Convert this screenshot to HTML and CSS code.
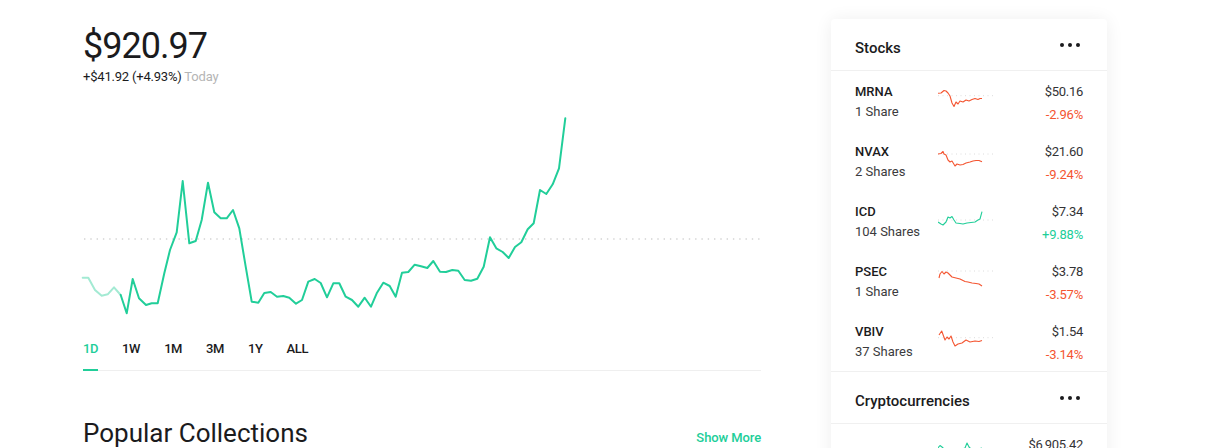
FILE: index.html
```html
<!DOCTYPE html>
<html lang="en">
<head>
<meta charset="utf-8">
<title>Portfolio</title>
<link rel="stylesheet" href="styles.css">
</head>
<body>
<div class="page">
  <main class="main">
    <h1 class="price">$920.97</h1>
    <div class="change">+$41.92 (+4.93%) <span class="today">Today</span></div>
    <svg class="chart" width="678" height="230" viewBox="83 100 678 230">
      <line x1="84" y1="239" x2="761" y2="239" class="baseline"/>
      <polyline class="line-pre" points="82.7,277.7 88.3,277.7 95,290 101.7,295.7 107.7,294.3 114,287.3 120.7,295"/>
      <polyline class="line" points="120.7,295 126.7,313.3 132.7,279 139,298.3 146,305 151.7,303.3 157.7,303.3 164.3,273.3 170,250 176.7,232.3 182.7,181 189.3,243.3 195.7,241 201.7,220 208,182.7 214.3,212.3 220.7,218.3 226.7,218.3 233,210 239.3,228.3 245.7,266.7 251.7,301.7 258.3,302.7 264.3,293 270.7,292 277,296.7 283.3,296 289.3,297.7 296,303.7 302,300 308.3,281.7 314.7,279 320.7,283 327,297.3 333.3,283.3 339.3,283.3 345.7,296.7 352,300 358.3,306.7 364.7,297.7 371,306.7 376.7,293.3 383.3,282.7 389.7,286 395.7,296.7 402,272.7 408.3,272 414.7,264.7 421,266.3 427.3,268 433.3,261 440,271.7 446,272 452.3,270 458.3,270.7 464.7,280 471,280.7 477.3,278.7 483.7,266.7 490,237.3 496.3,248.3 502.7,252 508.7,258 515,247 521.3,242.3 527.7,229.3 533.7,223.3 540,190 546.3,194 552.7,184.3 559,168.3 565.3,118.3"/>
    </svg>
    <nav class="tabs">
      <span class="tab active">1D</span>
      <span class="tab">1W</span>
      <span class="tab">1M</span>
      <span class="tab">3M</span>
      <span class="tab">1Y</span>
      <span class="tab">ALL</span>
    </nav>
    <div class="section-head">
      <h2 class="section-title">Popular Collections</h2>
      <a class="show-more">Show More</a>
    </div>
  </main>

  <aside class="card">
    <div class="card-head">
      <span class="card-title">Stocks</span>
      <svg class="dots" width="22" height="6" viewBox="0 0 22 6"><circle cx="3" cy="3" r="2"/><circle cx="11" cy="3" r="2"/><circle cx="19" cy="3" r="2"/></svg>
    </div>

    <div class="row">
      <div class="col-left"><div class="ticker">MRNA</div><div class="shares">1 Share</div></div>
      <svg class="spark" width="60" height="26" viewBox="0 0 60 26">
        <line x1="0" y1="9.7" x2="58" y2="9.7" class="spark-base"/>
        <polyline class="spark-red" points="0,7.3 3,7 6,4.5 8,5 10,7 12,10 14,17 16,20.5 18,16 20,18 22,15 25,16 28,14 31,15 34,13.5 37,12.5 40,13.5 42,12.5 44,12.5"/>
      </svg>
      <div class="col-right"><div class="quote">$50.16</div><div class="pct down">-2.96%</div></div>
    </div>

    <div class="row">
      <div class="col-left"><div class="ticker">NVAX</div><div class="shares">2 Shares</div></div>
      <svg class="spark" width="60" height="26" viewBox="0 0 60 26">
        <line x1="0" y1="8" x2="58" y2="8" class="spark-base"/>
        <polyline class="spark-red" points="0,8 3,7.5 5,5.5 6,8 8,9 10,14 12,16 14,15 17,20 19,18 22,19 25,18.5 28,17 32,16 35,15 38,14.5 41,14.5 44,15.7"/>
      </svg>
      <div class="col-right"><div class="quote">$21.60</div><div class="pct down">-9.24%</div></div>
    </div>

    <div class="row">
      <div class="col-left"><div class="ticker">ICD</div><div class="shares">104 Shares</div></div>
      <svg class="spark" width="60" height="26" viewBox="0 0 60 26">
        <line x1="0" y1="14" x2="58" y2="14" class="spark-base"/>
        <polyline class="spark-green" points="0,16 3,18 5,19 8,16 10,11 12,12 14,10.5 16,14 18,17 22,17.5 25,18 29,17 33,16.5 37,16 40,14 42,13 44,5.7"/>
      </svg>
      <div class="col-right"><div class="quote">$7.34</div><div class="pct up">+9.88%</div></div>
    </div>

    <div class="row">
      <div class="col-left"><div class="ticker">PSEC</div><div class="shares">1 Share</div></div>
      <svg class="spark" width="60" height="26" viewBox="0 0 60 26">
        <line x1="0" y1="5" x2="58" y2="5" class="spark-base"/>
        <polyline class="spark-red" points="1,12 2,8 4,5.5 6,8 8,6 10,7 12,9 14,11 18,12 22,13 27,15.5 30,16 34,17 38,17.5 41,18 44,20"/>
      </svg>
      <div class="col-right"><div class="quote">$3.78</div><div class="pct down">-3.57%</div></div>
    </div>

    <div class="row">
      <div class="col-left"><div class="ticker">VBIV</div><div class="shares">37 Shares</div></div>
      <svg class="spark" width="60" height="26" viewBox="0 0 60 26">
        <line x1="0" y1="11.7" x2="58" y2="11.7" class="spark-base"/>
        <polyline class="spark-red" points="1,9 3.7,5 7,14 9,11 11,13 13,10 15,16 17,20 20,18 24,17 28,14 32,16 37,15 41,15.5 44,14.5"/>
      </svg>
      <div class="col-right"><div class="quote">$1.54</div><div class="pct down">-3.14%</div></div>
    </div>

    <div class="card-head section-sep">
      <span class="card-title">Cryptocurrencies</span>
      <svg class="dots" width="22" height="6" viewBox="0 0 22 6"><circle cx="3" cy="3" r="2"/><circle cx="11" cy="3" r="2"/><circle cx="19" cy="3" r="2"/></svg>
    </div>

    <div class="row crypto">
      <div class="col-left"></div>
      <svg class="spark" width="60" height="26" viewBox="0 0 60 26">
        <line x1="0" y1="12" x2="58" y2="12" class="spark-base"/>
        <polyline class="spark-green" points="0,9 2,6.5 4,8 6,10 9,11 12,10 15,12 18,11 21,13 24,10 27,9 29,4 31,8 34,11 37,12 40,10 44,9"/>
      </svg>
      <div class="col-right"><div class="quote">$6,905.42</div></div>
    </div>
  </aside>
</div>
</body>
</html>
```

FILE: styles.css
```css
* { box-sizing: border-box; }

html, body {
  margin: 0;
  padding: 0;
  background: #ffffff;
}

body {
  font-family: Roboto, "Liberation Sans", sans-serif;
  color: #1b1b1d;
  overflow: hidden;
}

.page {
  display: flex;
  align-items: flex-start;
  gap: 70px;
  padding-left: 83px;
}

.main {
  width: 678px;
  flex: none;
  padding-top: 26px;
}

.price {
  margin: 0;
  font-size: 36px;
  line-height: 40px;
  font-weight: 400;
  letter-spacing: -1px;
}

.change {
  margin-top: 3px;
  font-size: 13px;
  line-height: 16px;
  letter-spacing: -0.2px;
  color: #1b1b1d;
}

.today {
  color: #b5b5b5;
}

.chart {
  display: block;
  margin-top: 15px;
  overflow: visible;
}

.chart .baseline {
  stroke: #d4d4d4;
  stroke-width: 1.4;
  stroke-dasharray: 1.4 4.9;
}

.chart polyline {
  fill: none;
  stroke-width: 2;
  stroke-linejoin: round;
  stroke-linecap: round;
}

.chart .line { stroke: #21ce99; }
.chart .line-pre { stroke: #a3ead3; }

.tabs {
  display: flex;
  gap: 24px;
  padding-top: 11px;
  border-bottom: 1px solid #efefef;
}

.tab {
  font-size: 13px;
  line-height: 16px;
  font-weight: 500;
  letter-spacing: -0.4px;
  padding-bottom: 12px;
  margin-bottom: -1px;
  border-bottom: 2px solid transparent;
  color: #1b1b1d;
}

.tab.active {
  color: #21ce99;
  border-bottom-color: #21ce99;
}

.section-head {
  display: flex;
  justify-content: space-between;
  align-items: baseline;
  margin-top: 46px;
}

.section-title {
  margin: 0;
  font-size: 26px;
  line-height: 32px;
  font-weight: 400;
}

.show-more {
  font-size: 13px;
  font-weight: 500;
  color: #21ce99;
  letter-spacing: -0.1px;
}

.card {
  width: 276px;
  flex: none;
  margin-top: 19px;
  background: #ffffff;
  border-radius: 4px;
  box-shadow: 0 1px 18px rgba(0, 0, 0, 0.07);
}

.card-head {
  display: flex;
  justify-content: space-between;
  align-items: center;
  padding: 18px 26px 11px 24px;
  border-bottom: 1px solid #f0f0f0;
}

.card-head.section-sep {
  border-top: 1px solid #f0f0f0;
}

.card-title {
  font-size: 15px;
  line-height: 22px;
  font-weight: 500;
  color: #1b1b1d;
}

.dots {
  display: block;
  fill: #1b1b1d;
  margin-top: -6px;
}

.row {
  display: grid;
  grid-template-columns: 83px 60px 1fr;
  align-items: start;
  height: 60px;
  padding: 13px 24px 0 24px;
}

.ticker {
  font-size: 13px;
  line-height: 16px;
  font-weight: 500;
  color: #1b1b1d;
}

.shares {
  margin-top: 4px;
  font-size: 13px;
  line-height: 16px;
  color: #3b3b3d;
}

.spark {
  display: block;
  margin-top: 2px;
}

.spark-base {
  stroke: #dcdcdc;
  stroke-width: 1;
  stroke-dasharray: 1 3.5;
}

.spark polyline {
  fill: none;
  stroke-width: 1.1;
  stroke-linejoin: round;
}

.spark-red { stroke: #f45531; }
.spark-green { stroke: #21ce99; }

.col-right {
  text-align: right;
}

.quote {
  font-size: 13px;
  line-height: 16px;
  color: #333335;
  letter-spacing: -0.3px;
}

.pct {
  margin-top: 7px;
  font-size: 13px;
  line-height: 16px;
  letter-spacing: -0.2px;
}

.pct.down { color: #f45531; }
.pct.up { color: #21ce99; }
```
